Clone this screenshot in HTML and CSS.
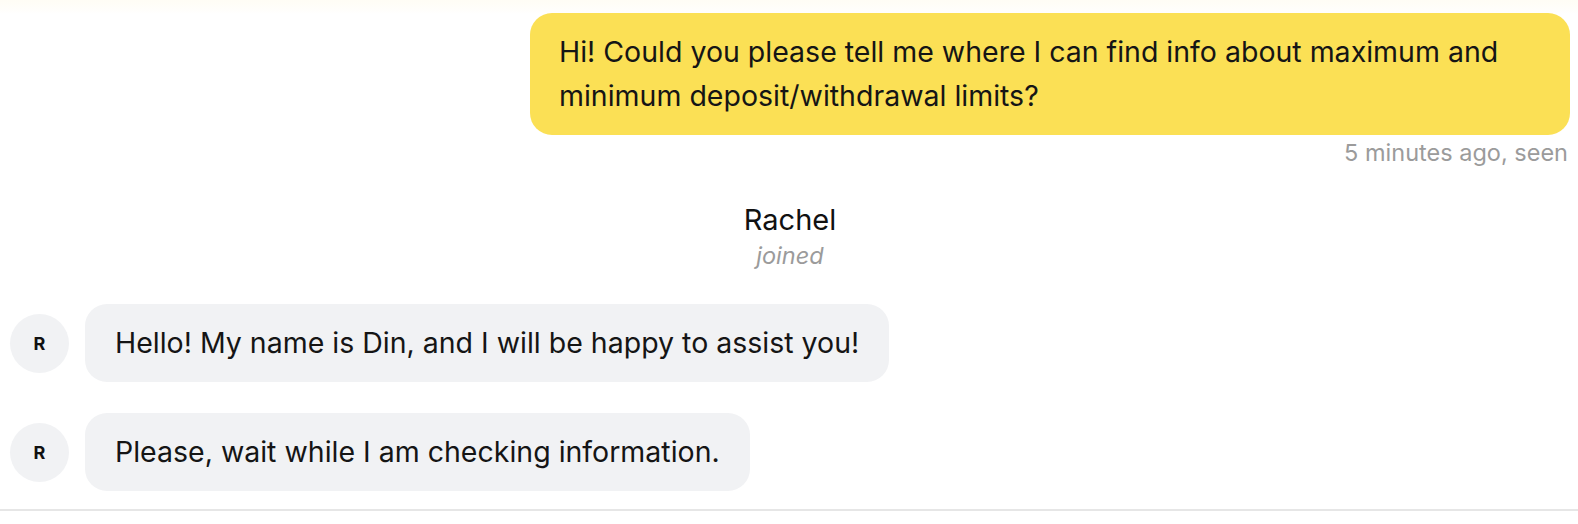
FILE: index.html
```html
<!DOCTYPE html>
<html lang="en">
<head>
<meta charset="utf-8">
<title>Chat</title>
<link rel="stylesheet" href="styles.css">
</head>
<body>
<main class="chat">
  <section class="msg-out">
    <div class="bubble bubble-out">Hi! Could you please tell me where I can find info about maximum and minimum deposit/withdrawal limits?</div>
    <div class="meta">5 minutes ago, seen</div>
  </section>
  <section class="system">
    <div class="system-name">Rachel</div>
    <div class="system-status">joined</div>
  </section>
  <section class="msg-in">
    <div class="avatar">R</div>
    <div class="bubble bubble-in">Hello! My name is Din, and I will be happy to assist you!</div>
  </section>
  <section class="msg-in">
    <div class="avatar">R</div>
    <div class="bubble bubble-in">Please, wait while I am checking information.</div>
  </section>
</main>
<footer class="composer"></footer>
</body>
</html>
```
FILE: styles.css
```css
* { box-sizing: border-box; }
html, body { margin: 0; padding: 0; }
body {
  background: linear-gradient(#fffdf5 0, #fffefb 10px, #ffffff 14px) no-repeat, #ffffff;
  font-family: Inter, "Noto Sans", "Liberation Sans", sans-serif;
  color: #151515;
  width: 1578px;
  height: 524px;
  overflow: hidden;
}
.chat {
  display: flex;
  flex-direction: column;
  padding: 13px 8px 0 10px;
  height: 509px;
}
.msg-out {
  display: flex;
  flex-direction: column;
  align-items: flex-end;
}
.bubble {
  border-radius: 22px;
  padding: 17px 30px;
  font-size: 28.5px;
  line-height: 44px;
}
.bubble-out {
  width: 1040px;
  background: #fbe055;
  padding-left: 29px;
}
.meta {
  margin-top: 4px;
  font-size: 23.5px;
  line-height: 28px;
  color: #9b9b9b;
  margin-right: 2px;
}
.system {
  display: flex;
  flex-direction: column;
  align-items: center;
  margin-top: 36px;
}
.system-name {
  font-size: 29px;
  line-height: 34px;
  color: #111;
}
.system-status {
  font-size: 23.5px;
  line-height: 38px;
  font-style: italic;
  color: #9b9b9b;
}
.msg-in {
  display: flex;
  align-items: center;
  gap: 16px;
  margin-top: 31px;
}
.system + .msg-in { margin-top: 29px; }
.avatar {
  width: 59px;
  height: 59px;
  border-radius: 50%;
  background: #f1f2f4;
  display: flex;
  align-items: center;
  justify-content: center;
  font-size: 18px;
  font-weight: 700;
  color: #111;
  flex: none;
}
.bubble-in {
  background: #f1f2f4;
}
.composer {
  border-top: 2px solid #e6e6e6;
  height: 15px;
}
```
